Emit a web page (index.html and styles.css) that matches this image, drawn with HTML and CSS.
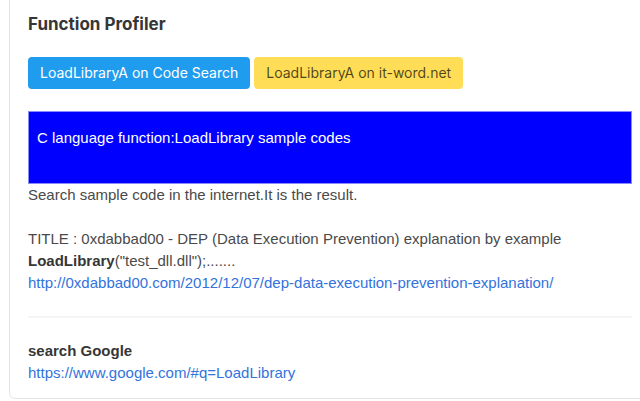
FILE: index.html
```html
<!DOCTYPE html>
<html>
<head>
<meta charset="utf-8">
<link rel="stylesheet" href="styles.css">
</head>
<body>
<div class="card">
  <h1 class="title">Function Profiler</h1>
  <div class="buttons">
    <a class="btn btn-info">LoadLibraryA on Code Search</a>
    <a class="btn btn-warn">LoadLibraryA on it-word.net</a>
  </div>
  <div class="banner">C language function:LoadLibrary sample codes</div>
  <p class="text">Search sample code in the internet.It is the result.</p>
  <p class="text gap">TITLE : 0xdabbad00 - DEP (Data Execution Prevention) explanation by example<br>
  <b>LoadLibrary</b>("test_dll.dll");.......<br>
  <a class="link">http://0xdabbad00.com/2012/12/07/dep-data-execution-prevention-explanation/</a></p>
  <hr class="rule">
  <p class="text"><b>search Google</b><br>
  <a class="link">https://www.google.com/#q=LoadLibrary</a></p>
</div>
</body>
</html>
```
FILE: styles.css
```css
html, body {
  margin: 0;
  padding: 0;
  background: #fff;
  overflow: hidden;
  width: 640px;
  height: 401px;
}
.card {
  margin: -8px 0 0 9px;
  width: 604px;
  padding: 20px 18px 14px 18px;
  border: 1px solid #e4e4e4;
  border-radius: 6px;
  font-family: "Liberation Sans", Arial, sans-serif;
  color: #4a4a4a;
}
.title {
  margin: 0;
  font-family: Inter, "Liberation Sans", sans-serif;
  font-size: 17px;
  font-weight: 700;
  line-height: 22px;
  color: #363636;
}
.buttons {
  display: flex;
  gap: 4px;
  margin-top: 22px;
}
.btn {
  display: block;
  height: 32px;
  box-sizing: border-box;
  padding: 0 12px;
  line-height: 32px;
  border-radius: 4px;
  font-family: Inter, "Liberation Sans", sans-serif;
  font-size: 14px;
}
.btn-info {
  background: #209cee;
  color: #fff;
}
.btn-warn {
  background: #ffdd57;
  color: rgba(0,0,0,0.7);
}
.banner {
  margin-top: 22px;
  height: 73px;
  box-sizing: border-box;
  padding: 15px 8px 0 8px;
  background: #0000ff;
  border: 1px solid #8a8aff;
  color: #fff;
  font-size: 15px;
  line-height: 22px;
}
.text {
  margin: 0;
  font-size: 15px;
  line-height: 22px;
}
.gap {
  margin-top: 22px;
}
.text b {
  color: #363636;
}
.link {
  color: #3273dc;
}
.rule {
  margin: 22px 0 22px 0;
  border: none;
  height: 2px;
  background: #f5f5f5;
}
```
